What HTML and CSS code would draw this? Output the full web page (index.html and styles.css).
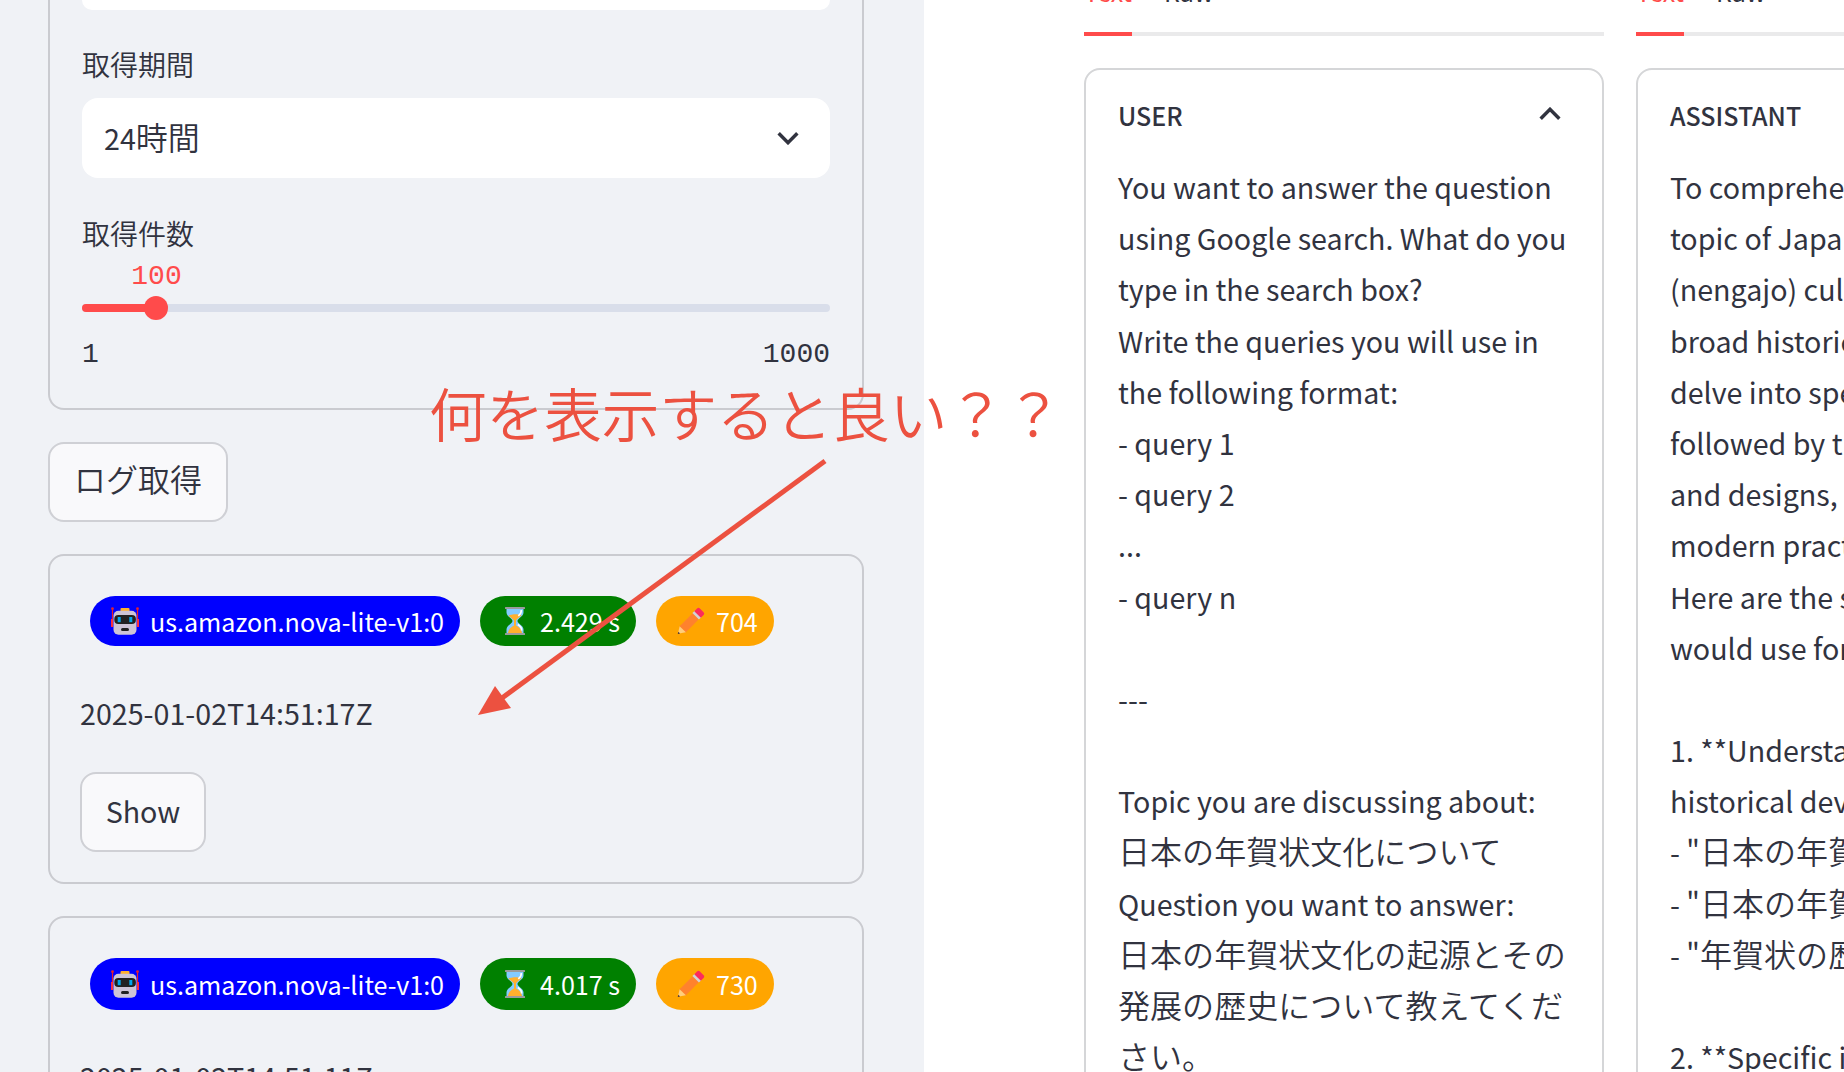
FILE: index.html
```html
<!DOCTYPE html>
<html lang="ja">
<head>
    <meta charset="UTF-8">
    <meta name="viewport" content="width=device-width, initial-scale=1.0">
    <title>Bedrock ログビューア</title>
    <link rel="stylesheet" href="styles.css">
</head>
<body>
    <svg class="sprite" aria-hidden="true">
        <symbol id="robot" viewBox="0 0 28 28">
            <path d="M1.5 3v17M26.5 3v17" stroke="#e8202a" stroke-width="1.2"/>
            <path d="M1 12v8M27 12v8" stroke="#f92f3c" stroke-width="2"/>
            <circle cx="1.5" cy="1.7" r="1.4" fill="#e8202a"/>
            <circle cx="26.5" cy="1.7" r="1.4" fill="#e8202a"/>
            <rect x="9.5" y="1" width="9" height="4" rx="1" fill="#ffb02e"/>
            <rect x="2.5" y="3.8" width="23" height="24" rx="5" fill="#cdc4d6"/>
            <rect x="3.3" y="8" width="21.6" height="9" rx="4" fill="#212121"/>
            <rect x="6.7" y="10" width="3" height="5.2" fill="#00a6ed"/>
            <rect x="18.3" y="10" width="3" height="5.2" fill="#00a6ed"/>
            <rect x="10" y="21" width="8" height="3" rx="1.5" fill="#212121"/>
        </symbol>
        <symbol id="hourglass" viewBox="0 0 20 28">
            <path d="M1.5 1.5h17v4c0 4-6 6-6 8.500s6 4.500 6 8.500v4h-17v-4c0-4 6-6 6-8.500s-6-4.500-6-8.500z" fill="#83cbff"/>
            <path d="M3.500 8.500c2-1 9-2 13-.5-1.500 2-4.500 3.500-5.500 5.500v5c2 1 5.500 3 6 7.500h-14c.5-4.500 4-6.500 6-7.500v-5c-1-2-4-3-5.500-5z" fill="#ffb02e"/>
            <path d="M16.300 3c.3 3-1.300 4.500-3 5.800M12.800 17.500c2.400 1.500 4 3.500 3.800 6" fill="none" stroke="#fff" stroke-width="1.600"/>
            <rect width="20" height="2" rx=".5" fill="#9b9b9b"/>
            <rect y="26" width="20" height="2" rx=".5" fill="#9b9b9b"/>
        </symbol>
        <symbol id="pencil" viewBox="0 0 30 30">
            <path d="M2.500 21L19 4.500l6.500 6.500L9 27.500z" fill="#ff822d"/>
            <path d="M2.800 20.500L1 28.700 9.500 27z" fill="#ffce7c"/>
            <path d="M1.500 26.500L.8 29l2.500-.7z" fill="#402a32"/>
            <path d="M16.500 6.500l2.500-2.500 7 7-2.500 2.500z" fill="#d3d3d3"/>
            <path d="M18.500 4.500L21.500 1.500q1.500-1.500 3 0l4 4q1.500 1.500 0 3l-3 3z" fill="#fc2b5c"/>
        </symbol>
    </svg>

    <div class="app">
        <aside class="sidebar">
            <section class="panel">
                <div class="select select-top"></div>
                <label class="label">取得期間</label>
                <div class="select">
                    <span class="select-value"><span class="latin">24</span>時間</span>
                    <svg class="chevron" viewBox="0 0 20 12"><path d="M2 2l8 8 8-8"/></svg>
                </div>
                <label class="label label-count">取得件数</label>
                <div class="slider">
                    <div class="slider-value">100</div>
                    <div class="slider-track"><div class="slider-fill"></div><div class="slider-thumb"></div></div>
                    <div class="slider-range"><span>1</span><span>1000</span></div>
                </div>
            </section>

            <button class="button button-log">ログ取得</button>

            <section class="card">
                <div class="badges">
                    <span class="badge model"><svg><use href="#robot"/></svg>us.amazon.nova-lite-v1:0</span>
                    <span class="badge latency"><svg><use href="#hourglass"/></svg>2.429 s</span>
                    <span class="badge tokens"><svg><use href="#pencil"/></svg>704</span>
                </div>
                <p class="timestamp">2025-01-02T14:51:17Z</p>
                <button class="button button-show">Show</button>
            </section>

            <section class="card">
                <div class="badges badges-tall">
                    <span class="badge model"><svg><use href="#robot"/></svg>us.amazon.nova-lite-v1:0</span>
                    <span class="badge latency"><svg><use href="#hourglass"/></svg>4.017 s</span>
                    <span class="badge tokens"><svg><use href="#pencil"/></svg>730</span>
                </div>
                <p class="timestamp">2025-01-02T14:51:11Z</p>
            </section>
        </aside>

        <main class="main">
            <div class="column">
                <div class="tabs"><span class="tab active">Text</span><span class="tab">Raw</span></div>
                <section class="message">
                    <header class="message-header">
                        <span>USER</span>
                        <svg class="chevron" viewBox="0 0 20 12"><path d="M2 10l8-8 8 8"/></svg>
                    </header>
                    <div class="message-body">
                        <p>You want to answer the question</p>
                        <p>using Google search. What do you</p>
                        <p>type in the search box?</p>
                        <p>Write the queries you will use in</p>
                        <p>the following format:</p>
                        <p>- query 1</p>
                        <p>- query 2</p>
                        <p>...</p>
                        <p>- query n</p>
                        <p></p>
                        <p>---</p>
                        <p></p>
                        <p>Topic you are discussing about:</p>
                        <p><span class="ja">日本の年賀状文化について</span></p>
                        <p>Question you want to answer:</p>
                        <p><span class="ja">日本の年賀状文化の起源とその</span></p>
                        <p><span class="ja">発展の歴史について教えてくだ</span></p>
                        <p><span class="ja">さい。</span></p>
                    </div>
                </section>
            </div>

            <div class="column">
                <div class="tabs"><span class="tab active">Text</span><span class="tab">Raw</span></div>
                <section class="message">
                    <header class="message-header">
                        <span>ASSISTANT</span>
                    </header>
                    <div class="message-body">
                        <p>To comprehensively</p>
                        <p>topic of Japanese</p>
                        <p>(nengajo) culture,</p>
                        <p>broad historical</p>
                        <p>delve into specific</p>
                        <p>followed by the</p>
                        <p>and designs, and</p>
                        <p>modern practices.</p>
                        <p>Here are the search</p>
                        <p>would use for this</p>
                        <p></p>
                        <p>1. **Understanding</p>
                        <p>historical development</p>
                        <p>- "<span class="ja">日本の年賀状</span>"</p>
                        <p>- "<span class="ja">日本の年賀状</span>"</p>
                        <p>- "<span class="ja">年賀状の歴史</span>"</p>
                        <p></p>
                        <p>2. **Specific inquiries</p>
                    </div>
                </section>
            </div>
        </main>
    </div>

    <!-- Anotación sobre la página -->
    <div class="note">何を表示すると良い？？</div>
    <svg class="arrow" viewBox="0 0 350 260">
        <path d="M347 3L24 240" stroke="#ec5140" stroke-width="5"/>
        <path d="M0 257l17-29 16 22z" fill="#ec5140"/>
    </svg>
</body>
</html>
```
FILE: styles.css
```css
* {
    box-sizing: border-box;
}

body {
    margin: 0;
    height: 1072px;
    overflow: hidden;
    position: relative;
    background: #ffffff;
    color: #31333f;
    font-family: "Noto Sans CJK JP", sans-serif;
    font-size: 28.65px;
}

p {
    margin: 0;
}

.sprite {
    position: absolute;
    width: 0;
    height: 0;
}

.app {
    display: flex;
    width: 1844px;
    height: 1072px;
    overflow: hidden;
}

.sidebar {
    flex: none;
    width: 924px;
    padding: 0 60px 0 48px;
    background: #f0f2f6;
}

.panel {
    height: 410px;
    padding: 0 32px;
    border: 2px solid #cacbd0;
    border-top: 0;
    border-radius: 0 0 16px 16px;
}

.select {
    display: flex;
    align-items: center;
    justify-content: space-between;
    height: 80px;
    padding: 0 30px 0 22px;
    border-radius: 16px;
    background: #ffffff;
    font-size: 32px;
    font-weight: 350;
}

.select-top {
    height: 10px;
    border-radius: 0 0 16px 16px;
}

.select-value {
    padding-bottom: 4px;
}

.latin {
    font-size: 28.65px;
    font-weight: 400;
}

.chevron {
    width: 24px;
    height: 14px;
    fill: none;
    stroke: #31333f;
    stroke-width: 3;
}

.label {
    display: block;
    height: 40px;
    margin: 34px 0 14px;
    line-height: 40px;
    font-size: 28px;
    font-weight: 350;
}

.label-count {
    margin: 35px 0 0;
}

.slider {
    font-family: "Liberation Mono", monospace;
    font-size: 28px;
}

.slider-value {
    width: 149px;
    height: 42px;
    margin-top: 9px;
    line-height: 42px;
    text-align: center;
    color: #ff4b4b;
    transform: translateY(-6px);
}

.slider-track {
    display: flex;
    align-items: center;
    height: 8px;
    border-radius: 4px;
    background: #d9deea;
}

.slider-fill {
    width: 74px;
    height: 8px;
    border-radius: 4px 0 0 4px;
    background: #ff4b4b;
}

.slider-thumb {
    width: 24px;
    height: 24px;
    margin-left: -12px;
    border-radius: 50%;
    background: #ff4b4b;
}

.slider-range {
    display: flex;
    justify-content: space-between;
    margin-top: 22px;
    line-height: 42px;
}

.button {
    display: block;
    height: 80px;
    padding: 0 0 3px;
    border: 2px solid #cfd0d5;
    border-radius: 16px;
    background: #f9f9fb;
    color: #31333f;
    font-family: inherit;
}

.button-log {
    width: 180px;
    margin: 32px 0;
    padding-bottom: 8px;
    font-size: 32px;
    font-weight: 350;
}

.button-show {
    width: 126px;
    font-size: 28.65px;
}

.card {
    height: 330px;
    margin-bottom: 32px;
    padding: 40px 30px;
    border: 2px solid #cacbd0;
    border-radius: 16px;
}

.badges {
    display: flex;
    gap: 20px;
    height: 50px;
    padding-left: 10px;
}

.badge {
    display: flex;
    align-items: center;
    padding-left: 20px;
    border-radius: 26px;
    color: #ffffff;
    font-size: 25.1px;
    line-height: 48px;
    white-space: nowrap;
}

.badges-tall {
    height: 52px;
}

.badge svg {
    flex: none;
    height: 28px;
}

.model {
    width: 370px;
    padding-left: 21px;
    background: #0000ff;
}

.model svg {
    width: 28px;
    margin-right: 11px;
}

.latency {
    width: 156px;
    padding-left: 25px;
    background: #008000;
}

.latency svg {
    width: 20px;
    margin-right: 15px;
}

.tokens {
    width: 118px;
    background: #ffa500;
}

.tokens svg {
    width: 30px;
    margin-right: 10px;
}

.timestamp {
    height: 52px;
    margin: 42px 0 32px;
    line-height: 50px;
}

.main {
    display: flex;
    gap: 32px;
    padding-left: 160px;
}

.column {
    flex: none;
    width: 520px;
}

.tabs {
    display: flex;
    gap: 32px;
    height: 36px;
    margin-bottom: 32px;
    border-bottom: 4px solid #eaeaeb;
    font-size: 25px;
    line-height: 30px;
}

.tab {
    height: 60px;
    margin-top: -24px;
}

.tab.active {
    width: 48px;
    border-bottom: 4px solid #ff4b4b;
    color: #ff4b4b;
}

.message {
    height: 1200px;
    padding: 0 32px;
    border: 2px solid #d5d6d8;
    border-radius: 16px;
}

.message-header {
    display: flex;
    align-items: center;
    justify-content: space-between;
    height: 91px;
    padding: 0 8px 1px 0;
    font-size: 25px;
    font-weight: 500;
}

.message-header .chevron {
    margin-bottom: 2px;
}

.message-body {
    white-space: nowrap;
}

.message-body p {
    height: 51.2px;
    line-height: 51.2px;
}

.ja {
    font-size: 32.05px;
    font-weight: 350;
    line-height: 1;
}

/* Anotación encima de la página */
.note {
    position: absolute;
    left: 429px;
    top: 372px;
    color: #ec5140;
    font-size: 57.6px;
    font-weight: 350;
    line-height: 80px;
    white-space: nowrap;
}

.arrow {
    position: absolute;
    left: 478px;
    top: 458px;
    width: 350px;
    height: 260px;
}
```
